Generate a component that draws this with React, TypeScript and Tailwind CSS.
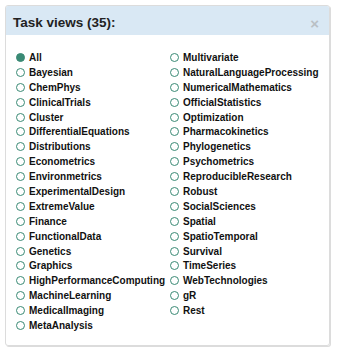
import React from 'react';

const left = [
  'All', 'Bayesian', 'ChemPhys', 'ClinicalTrials', 'Cluster', 'DifferentialEquations', 'Distributions',
  'Econometrics', 'Environmetrics', 'ExperimentalDesign', 'ExtremeValue', 'Finance', 'FunctionalData',
  'Genetics', 'Graphics', 'HighPerformanceComputing', 'MachineLearning', 'MedicalImaging', 'MetaAnalysis',
];

const right = [
  'Multivariate', 'NaturalLanguageProcessing', 'NumericalMathematics', 'OfficialStatistics', 'Optimization',
  'Pharmacokinetics', 'Phylogenetics', 'Psychometrics', 'ReproducibleResearch', 'Robust', 'SocialSciences',
  'Spatial', 'SpatioTemporal', 'Survival', 'TimeSeries', 'WebTechnologies', 'gR', 'Rest',
];

function Item({ label, checked }: { label: string; checked?: boolean }) {
  return (
    <li className="flex items-center h-[14.9px] cursor-pointer">
      <span
        className={`w-[9px] h-[9px] rounded-full border-[1.5px] border-[#3a8a75] mr-[4px] shrink-0 ${checked ? 'bg-[#3a8a75]' : 'bg-white'}`}
      ></span>
      <span className="whitespace-nowrap">{label}</span>
    </li>
  );
}

export default function App() {
  return (
    <div className="w-[338px] h-[352px] bg-white p-[5px] pr-[8px] pb-[6px]" style={{ fontFamily: '"Liberation Sans", Arial, sans-serif' }}>
      <div className="h-full border border-[#dcdcdc] rounded-[3px] shadow-[1px_1px_0_#dcdcdc] flex flex-col overflow-hidden">
        {/* header */}
        <div className="h-[29px] bg-[#d9e8f4] flex items-center justify-between pl-[7px] pr-[10px] pt-[5px]">
          <h2 className="text-[13.5px] font-bold text-[#222]">Task views (35):</h2>
          <span className="text-[#b9c0c5] text-[15px] leading-none font-bold">×</span>
        </div>

        {/* list */}
        <div className="flex pl-[10px] pt-[15px] text-[10px] font-bold text-[#111]">
          <ul className="w-[154px]">
            {left.map((l, i) => (
              <Item key={l} label={l} checked={i === 0} />
            ))}
          </ul>
          <ul>
            {right.map((l) => (
              <Item key={l} label={l} />
            ))}
          </ul>
        </div>
      </div>
    </div>
  );
}
